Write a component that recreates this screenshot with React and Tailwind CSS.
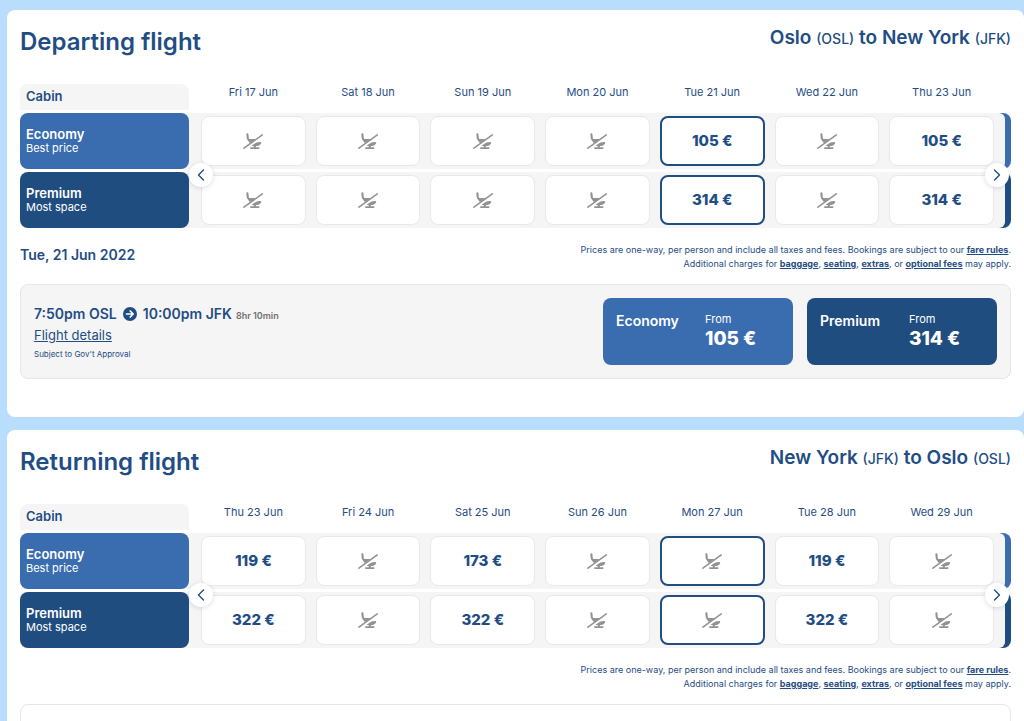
import React from "react";

const departing = {
  title: "Departing flight",
  from: ["Oslo", "OSL"],
  to: ["New York", "JFK"],
  days: ["Fri 17 Jun", "Sat 18 Jun", "Sun 19 Jun", "Mon 20 Jun", "Tue 21 Jun", "Wed 22 Jun", "Thu 23 Jun"],
  economy: [null, null, null, null, 105, null, 105],
  premium: [null, null, null, null, 314, null, 314],
  selected: 4,
  date: "Tue, 21 Jun 2022",
};

const returning = {
  title: "Returning flight",
  from: ["New York", "JFK"],
  to: ["Oslo", "OSL"],
  days: ["Thu 23 Jun", "Fri 24 Jun", "Sat 25 Jun", "Sun 26 Jun", "Mon 27 Jun", "Tue 28 Jun", "Wed 29 Jun"],
  economy: [119, null, 173, null, null, 119, null],
  premium: [322, null, 322, null, null, 322, null],
  selected: 4,
};

function NoSeatIcon() {
  return (
    <svg width="20" height="16" viewBox="0 0 20 16" role="img" aria-label="Not available">
      <g fill="none" stroke="#929292" strokeLinecap="round">
        <path d="M4.4 1.4 L4.7 4.8 Q4.9 6.2 5.8 6.8" strokeWidth="2.1" />
        <path d="M0.9 15.2 L19.3 1.9" strokeWidth="1.5" />
        <path d="M7.8 15.1 H15.8" strokeWidth="1.6" />
      </g>
      <path fill="#929292" d="M4.6 5.9 H13 L7.9 9.8 H6.6 Q5.6 9.2 5.3 7.6 Z" />
      <path fill="#929292" d="M8.8 12.6 L12.6 9.9 Q14 9.1 17.4 9.1 Q18.8 9.4 18 10.7 Q16.8 12.6 14.4 13.1 H12.9 V14.8 H10.7 V13.1 H9.2 Z" />
    </svg>
  );
}

function Chevron({ right }) {
  return (
    <svg width="8" height="12" viewBox="0 0 8 12" aria-hidden="true">
      <path
        d={right ? "M1.5 1 L6.5 6 L1.5 11" : "M6.5 1 L1.5 6 L6.5 11"}
        fill="none" stroke="#1f4d84" strokeWidth="1.4" strokeLinecap="round" strokeLinejoin="round"
      />
    </svg>
  );
}

function FareRow({ name, note, prices, days, selected, color }) {
  return (
    <tr className="h-14">
      <th scope="row" className="h-14 rounded-l-lg bg-[#f5f5f5] p-0 text-left">
        <div className={`mr-[7px] flex h-14 flex-col justify-center rounded-lg px-1.5 text-white ${color}`}>
          <span className="text-[13px] leading-[14px] font-semibold">{name}</span>
          <span className="text-[11px] leading-[14px] font-normal">{note}</span>
        </div>
      </th>
      {prices.map((price, i) => (
        <td key={days[i]} className="bg-[#f5f5f5] px-[5px] py-0">
          <button
            type="button"
            disabled={price === null}
            aria-label={`${name}, ${days[i]}${price === null ? ", not available" : `, ${price} €`}`}
            className={`flex h-[50px] w-full items-center justify-center rounded-lg bg-white text-[15px] font-extrabold ${
              i === selected ? "border-2 border-[#1f4d84]" : "border border-[#e9e9e9]"
            }`}
          >
            {price === null ? <NoSeatIcon /> : `${price} €`}
          </button>
        </td>
      ))}
      <td className="p-0">
        <div className={`h-14 rounded-r-lg ${color}`}>
          <div className="h-14 w-1.5 rounded-r-lg bg-[#f5f5f5]" />
        </div>
      </td>
    </tr>
  );
}

const circle =
  "absolute top-[82px] flex size-6 items-center justify-center rounded-full bg-white shadow-[0_1px_5px_rgba(31,77,132,0.18)]";

function FareTable({ flight }) {
  const { days, selected } = flight;
  return (
    <div className="relative mt-[23px]">
      <table className="w-full table-fixed border-separate border-spacing-x-0 border-spacing-y-[3px]">
        <colgroup>
          <col className="w-44" />
          {days.map((day) => <col key={day} />)}
          <col className="w-3" />
        </colgroup>
        <thead>
          <tr>
            <th scope="col" className="p-0 text-left">
              <div className="mr-[7px] flex h-[26px] items-center rounded-t-lg bg-[#f5f5f5] px-1.5 text-[13px] font-semibold">Cabin</div>
            </th>
            {days.map((day) => (
              <th key={day} scope="col" className="p-0 pb-2.5 text-center text-[11px] leading-4 font-normal">{day}</th>
            ))}
            <td className="p-0" />
          </tr>
        </thead>
        <tbody>
          <FareRow name="Economy" note="Best price" prices={flight.economy} days={days} selected={selected} color="bg-[#3a6db0]" />
          <FareRow name="Premium" note="Most space" prices={flight.premium} days={days} selected={selected} color="bg-[#1f4d80]" />
        </tbody>
      </table>
      <button type="button" aria-label="Earlier dates" className={`${circle} left-[169px]`}><Chevron /></button>
      <button type="button" aria-label="Later dates" className={`${circle} right-0.5`}><Chevron right /></button>
    </div>
  );
}

function TextLink({ children }) {
  return <a href="#" className="font-bold underline">{children}</a>;
}

function FareCard({ name, price, color }) {
  return (
    <button type="button" className={`flex h-[67px] w-[190px] items-start rounded-lg px-[13px] pt-3 text-left text-white ${color}`}>
      <span className="w-[89px] pt-px text-sm leading-5 font-semibold">{name}</span>
      <span className="flex flex-col">
        <span className="pt-0.5 text-[11px] leading-[14px]">From</span>
        <span className="text-[19px] leading-[26px] font-extrabold">{price} €</span>
      </span>
    </button>
  );
}

function FlightSection({ flight, children }) {
  return (
    <section className="rounded-lg bg-white px-[13px] pt-4 pb-[38px]">
      <header className="flex items-start justify-between">
        <h2 className="text-2xl leading-8 font-semibold">{flight.title}</h2>
        <p className="text-[19px] leading-6 font-semibold">
          {flight.from[0]} <span className="text-sm font-medium">({flight.from[1]})</span> to {flight.to[0]}{" "}
          <span className="text-sm font-medium">({flight.to[1]})</span>
        </p>
      </header>
      <FareTable flight={flight} />
      <div className="mt-3 flex items-start justify-between">
        <h3 className="text-sm leading-6 font-semibold">{flight.date}</h3>
        <p className="text-right text-[9px] leading-[14px]">
          Prices are one-way, per person and include all taxes and fees. Bookings are subject to our <TextLink>fare rules</TextLink>.
          <br />
          Additional charges for <TextLink>baggage</TextLink>, <TextLink>seating</TextLink>, <TextLink>extras</TextLink>, or{" "}
          <TextLink>optional fees</TextLink> may apply.
        </p>
      </div>
      {children}
    </section>
  );
}

export default function App() {
  return (
    <main className="flex h-screen flex-col gap-[13px] overflow-hidden bg-[#b9ddfc] pt-2.5 pl-[7px] font-['Inter',sans-serif] text-[#1f4d84] *:shrink-0">
      <FlightSection flight={departing}>
        <article className="mt-[13px] flex items-start justify-between rounded-lg border border-[#e6e6e6] bg-[#f5f5f5] p-[13px]">
          <div className="flex flex-col items-start pt-1.5">
            <p className="flex items-center text-sm leading-5 font-semibold">
              7:50pm OSL
              <svg width="14" height="14" viewBox="0 0 14 14" className="mx-1.5" role="img" aria-label="to">
                <circle cx="7" cy="7" r="7" fill="#1f4d84" />
                <path d="M3.5 7 H10 M7.2 4 L10.2 7 L7.2 10" fill="none" stroke="white" strokeWidth="1.7" strokeLinecap="round" strokeLinejoin="round" />
              </svg>
              10:00pm JFK
              <span className="ml-1 pt-1 text-[9px] leading-4 text-[#707070]">8hr 10min</span>
            </p>
            <a href="#" className="text-[13px] leading-[22px] underline">Flight details</a>
            <p className="text-[8px] leading-4">Subject to Gov't Approval</p>
          </div>
          <div className="flex gap-3.5">
            <FareCard name="Economy" price={105} color="bg-[#3a6db0]" />
            <FareCard name="Premium" price={314} color="bg-[#1f4d80]" />
          </div>
        </article>
      </FlightSection>
      <FlightSection flight={returning}>
        <article className="mt-[13px] h-24 rounded-lg border border-[#e6e6e6] bg-white" />
      </FlightSection>
    </main>
  );
}
